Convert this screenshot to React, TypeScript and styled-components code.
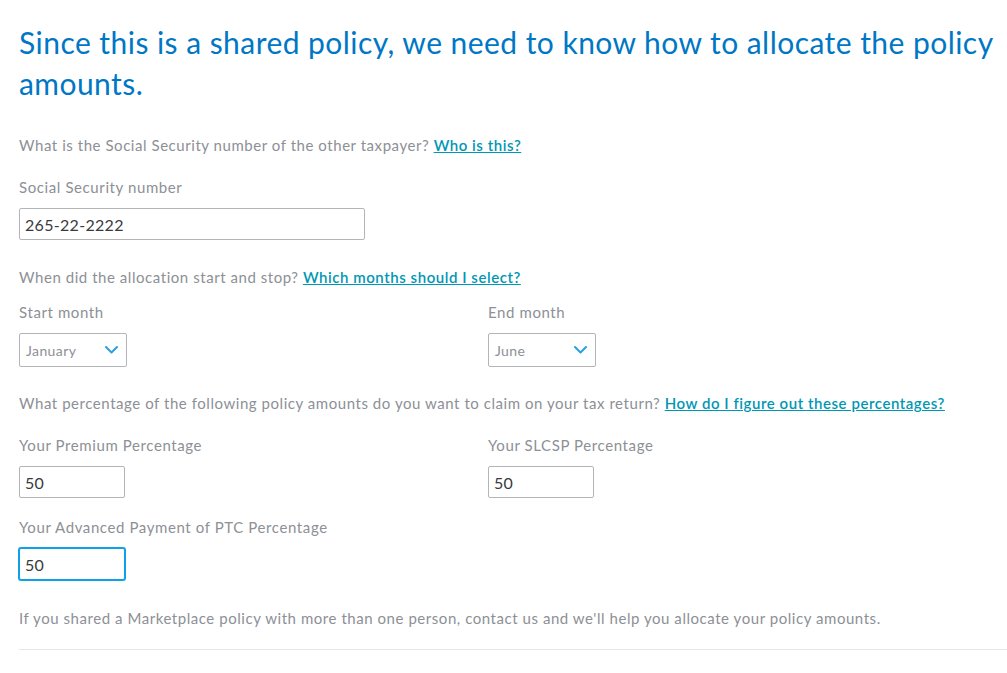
import React, { useState } from 'react';
import styled, { createGlobalStyle } from 'styled-components';

const GlobalStyle = createGlobalStyle`
  html, body {
    margin: 0;
    padding: 0;
    background: #ffffff;
  }
  body {
    font-family: Lato, 'Open Sans', sans-serif;
    color: #8d9096;
  }
`;

const Page = styled.div`
  padding: 22px 0 0 19px;
  width: 988px;
`;

const Heading = styled.h1`
  margin: 0 0 31px;
  font-size: 30px;
  line-height: 41px;
  font-weight: 400;
  color: #0077c5;
  letter-spacing: 0.45px;
`;

const Question = styled.p<{ $gap?: number }>`
  margin: 0 0 ${(p) => p.$gap ?? 20}px;
  font-size: 15px;
  line-height: 20px;
  letter-spacing: 0.55px;
  color: #8d9096;
`;

const HelpLink = styled.a`
  color: #0097b5;
  font-weight: 600;
  text-decoration: underline;
  cursor: pointer;
`;

const Field = styled.div<{ $gap?: number }>`
  display: flex;
  flex-direction: column;
  margin-bottom: ${(p) => p.$gap ?? 16}px;
`;

const Label = styled.label`
  font-size: 15px;
  line-height: 20px;
  letter-spacing: 0.6px;
  color: #8d9096;
  margin-bottom: 11px;
`;

const Row = styled.div`
  display: grid;
  grid-template-columns: 469px 1fr;
`;

const TextInput = styled.input<{ $width: number; $focused?: boolean }>`
  box-sizing: border-box;
  width: ${(p) => p.$width}px;
  height: 32px;
  padding: 0 5px;
  font-family: Lato, 'Open Sans', sans-serif;
  font-size: 16px;
  letter-spacing: 0.3px;
  color: #393a3d;
  border: 1px solid ${(p) => (p.$focused ? '#0fa0e6' : '#b4b5b7')};
  border-radius: 2px;
  outline: none;
  box-shadow: ${(p) => (p.$focused ? '0 0 0 1px #0fa0e6' : 'none')};
  background: #fff;
`;

const SelectBox = styled.div`
  box-sizing: border-box;
  width: 108px;
  height: 34px;
  border: 1px solid #b4b5b7;
  border-radius: 2px;
  display: flex;
  align-items: center;
  justify-content: space-between;
  padding: 0 8px 0 6px;
  font-size: 14px;
  letter-spacing: 0.4px;
  color: #8d9096;
  background: #fff;
`;

const Chevron = () => (
  <svg width="13" height="8" viewBox="0 0 13 8">
    <path d="M1 1l5.5 5.5L12 1" fill="none" stroke="#2ca0e0" strokeWidth="2" strokeLinecap="round" strokeLinejoin="round" />
  </svg>
);

const Divider = styled.hr`
  border: none;
  border-top: 1px solid #e6e6e6;
  margin: 21px 0 0;
`;

export default function App() {
  const [ssn, setSsn] = useState('265-22-2222');
  const [premium, setPremium] = useState('50');
  const [slcsp, setSlcsp] = useState('50');
  const [advance, setAdvance] = useState('50');

  return (
    <Page>
      <GlobalStyle />
      <Heading>Since this is a shared policy, we need to know how to allocate the policy amounts.</Heading>

      <Question $gap={22}>
        What is the Social Security number of the other taxpayer? <HelpLink>Who is this?</HelpLink>
      </Question>
      <Field $gap={27}>
        <Label>Social Security number</Label>
        <TextInput $width={346} value={ssn} onChange={(e) => setSsn(e.target.value)} />
      </Field>

      <Question $gap={15}>
        When did the allocation start and stop? <HelpLink>Which months should I select?</HelpLink>
      </Question>
      <Row>
        <Field $gap={26}>
          <Label>Start month</Label>
          <SelectBox>
            January
            <Chevron />
          </SelectBox>
        </Field>
        <Field $gap={26}>
          <Label>End month</Label>
          <SelectBox>
            June
            <Chevron />
          </SelectBox>
        </Field>
      </Row>

      <Question $gap={22}>
        What percentage of the following policy amounts do you want to claim on your tax return?{' '}
        <HelpLink>How do I figure out these percentages?</HelpLink>
      </Question>
      <Row>
        <Field $gap={19}>
          <Label>Your Premium Percentage</Label>
          <TextInput $width={106} value={premium} onChange={(e) => setPremium(e.target.value)} />
        </Field>
        <Field $gap={19}>
          <Label>Your SLCSP Percentage</Label>
          <TextInput $width={106} value={slcsp} onChange={(e) => setSlcsp(e.target.value)} />
        </Field>
      </Row>
      <Field $gap={28}>
        <Label>Your Advanced Payment of PTC Percentage</Label>
        <TextInput $width={106} $focused value={advance} onChange={(e) => setAdvance(e.target.value)} />
      </Field>

      <Question $gap={0}>
        If you shared a Marketplace policy with more than one person, contact us and we'll help you allocate your policy amounts.
      </Question>
      <Divider />
    </Page>
  );
}
